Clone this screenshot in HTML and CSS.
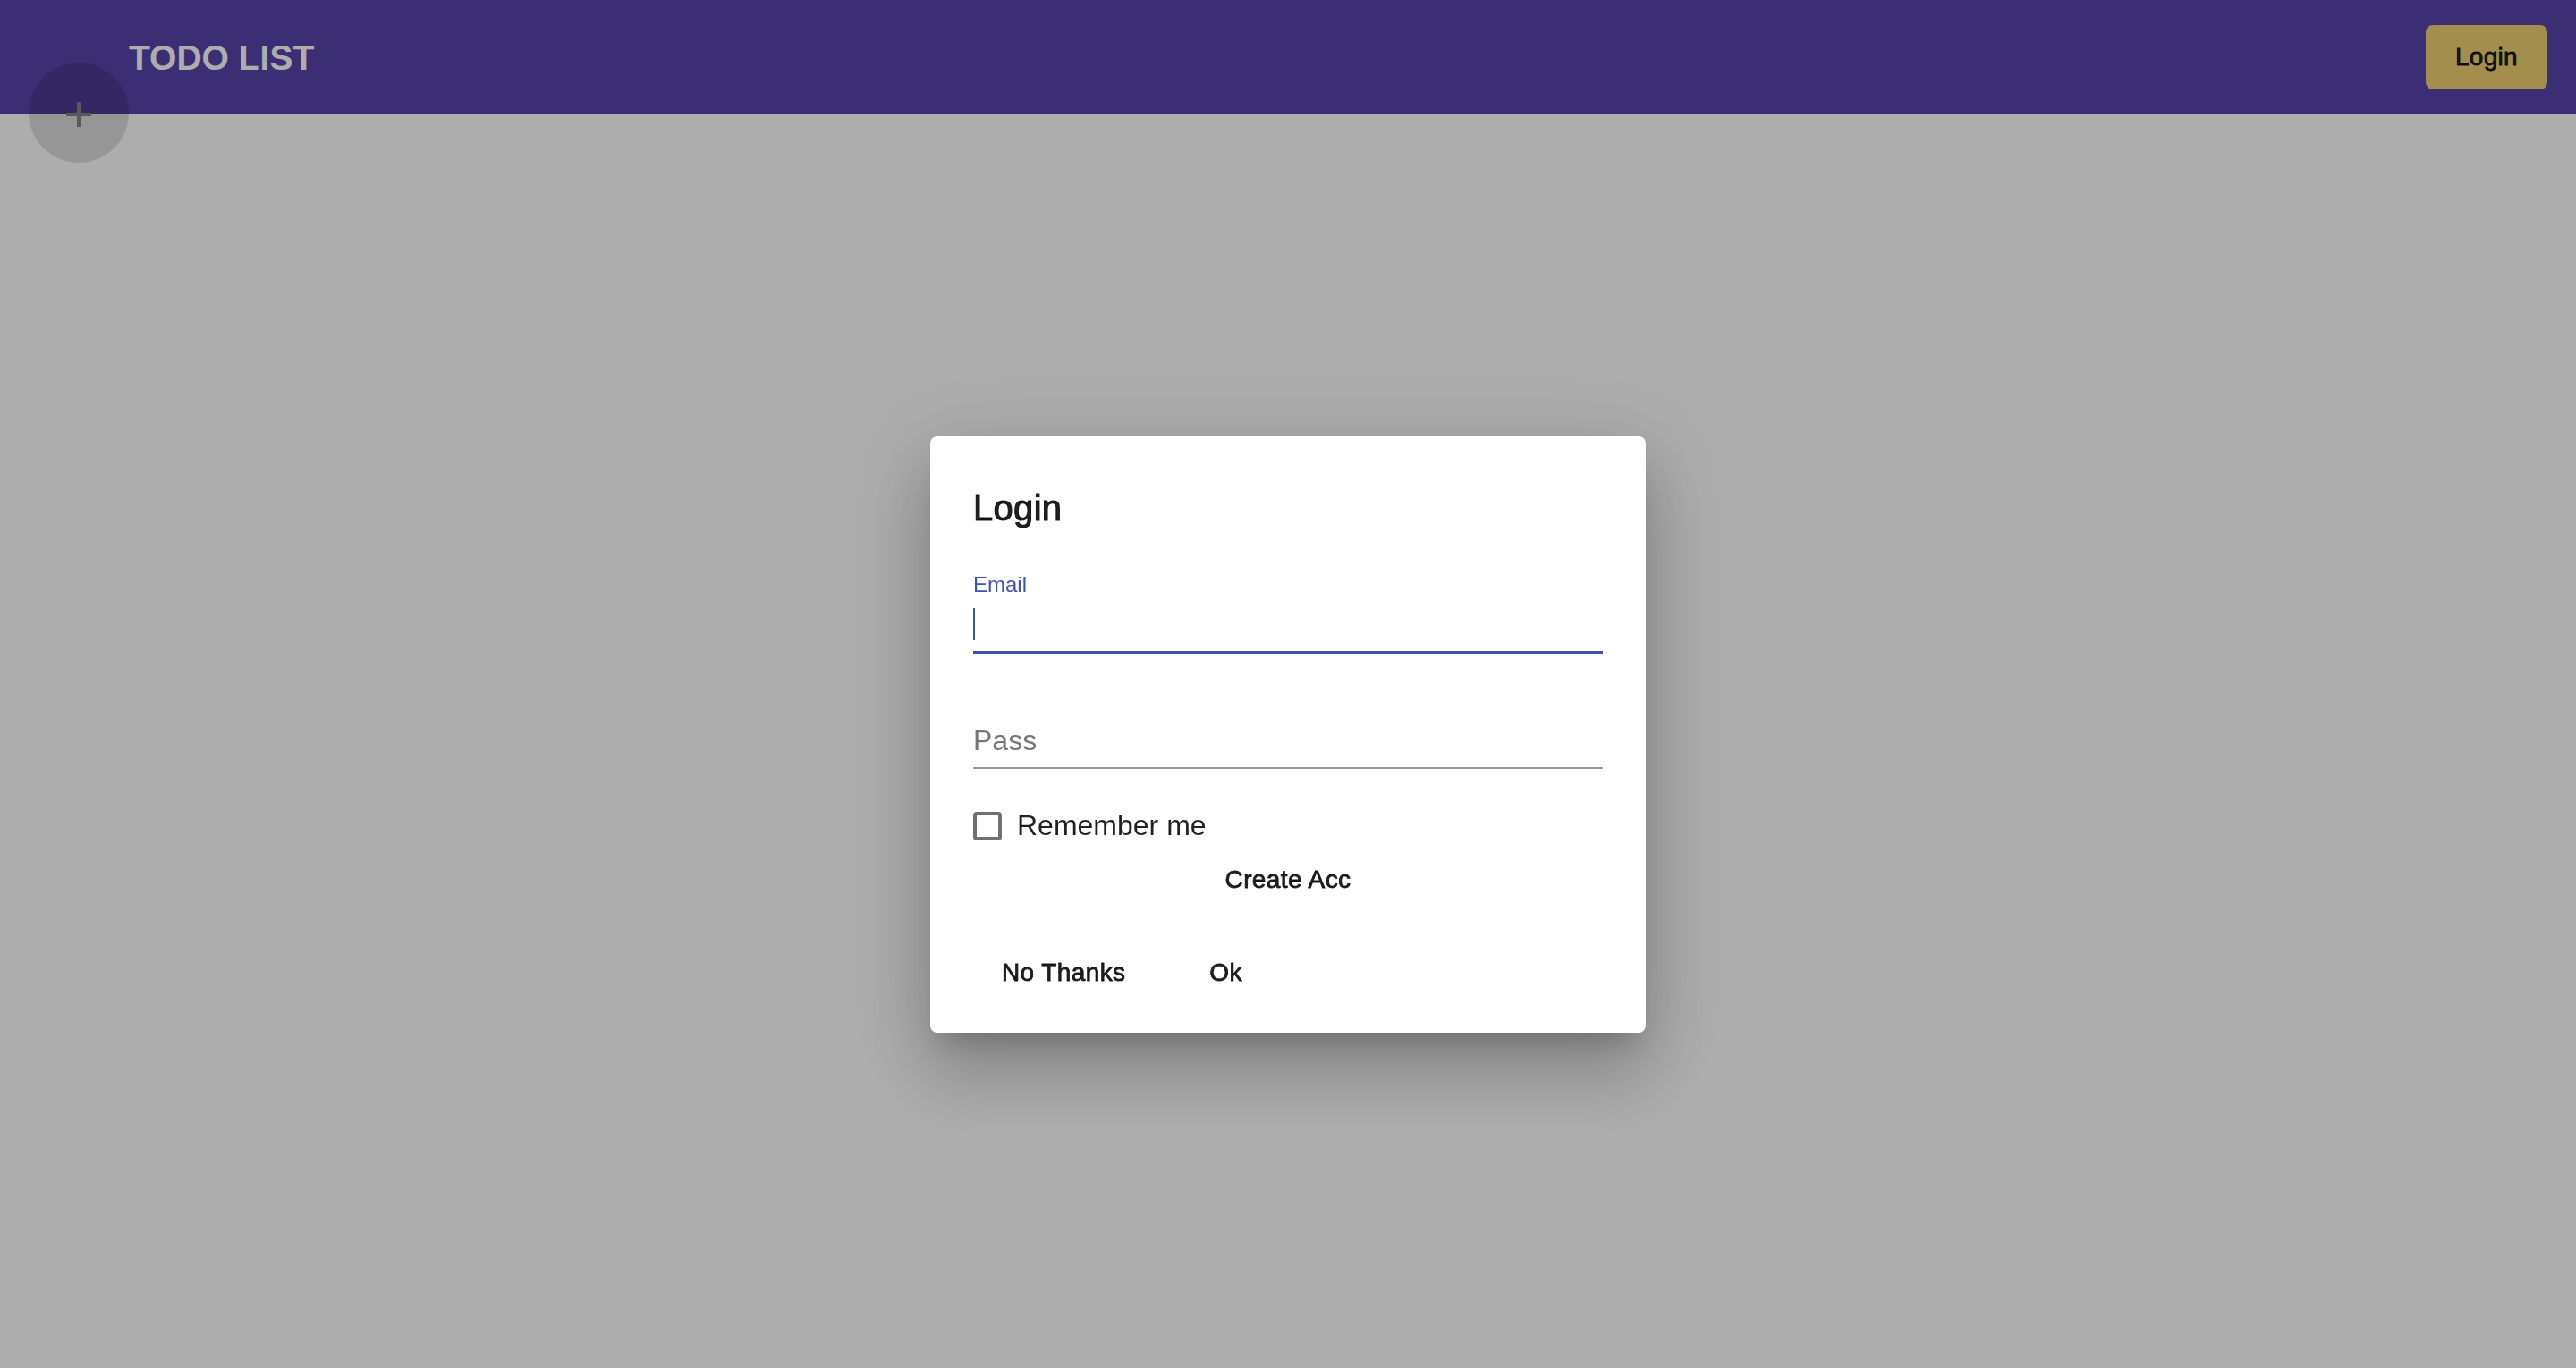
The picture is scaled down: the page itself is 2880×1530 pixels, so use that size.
FILE: index.html
```html
<!DOCTYPE html>
<html lang="en">
<head>
<meta charset="utf-8">
<title>TODO LIST</title>
<link rel="stylesheet" href="styles.css">
</head>
<body>
<header class="toolbar">
  <span class="brand">TODO LIST</span>
  <button class="login-btn" type="button">Login</button>
</header>
<button class="fab" type="button" aria-label="Add todo">
  <svg class="fab-icon" width="28" height="28" viewBox="0 0 28 28" aria-hidden="true">
    <rect x="12" y="0" width="4" height="28" fill="#848484"/>
    <rect x="0" y="12" width="28" height="4" fill="#848484"/>
  </svg>
</button>
<main class="content"></main>

<div class="backdrop"></div>
<div class="dialog-layer">
  <div class="dialog" role="dialog" aria-labelledby="dlg-title">
    <h2 class="dialog-title" id="dlg-title">Login</h2>
    <div class="field field-focused">
      <label class="field-label" for="email">Email</label>
      <div class="field-input-wrap">
        <span class="caret"></span>
        <input class="field-input" id="email" type="email">
      </div>
    </div>
    <div class="field field-pass">
      <div class="field-label-space"></div>
      <div class="field-input-wrap">
        <input class="field-input" type="password" placeholder="Pass">
      </div>
    </div>
    <label class="check-row">
      <span class="check-box"></span>
      <span class="check-label">Remember me</span>
    </label>
    <div class="create-row">
      <button class="text-btn" type="button">Create Acc</button>
    </div>
    <div class="actions">
      <button class="text-btn" type="button">No Thanks</button>
      <button class="text-btn" type="button">Ok</button>
    </div>
  </div>
</div>
</body>
</html>
```

FILE: styles.css
```css
html, body {
  margin: 0;
  padding: 0;
}

body {
  font-family: "Liberation Sans", Arial, sans-serif;
  background: #ffffff;
  height: 1530px;
  overflow: hidden;
  position: relative;
}

.toolbar {
  height: 128px;
  box-sizing: border-box;
  background: #5844ab;
  display: flex;
  align-items: center;
  padding: 0 32px 0 144px;
}

.brand {
  flex: 1;
  font-size: 39px;
  font-weight: 700;
  color: #ffffff;
  line-height: 1;
}

.login-btn {
  height: 72px;
  min-width: 128px;
  padding: 0 33px;
  border: 0;
  border-radius: 8px;
  background: #f1d273;
  color: rgba(0, 0, 0, 0.87);
  font-family: "Liberation Sans", Arial, sans-serif;
  font-size: 28px;
  font-weight: 500;
  letter-spacing: 0.3px;
  -webkit-text-stroke: 0.8px rgba(0, 0, 0, 0.87);
  cursor: pointer;
}

.fab {
  position: absolute;
  left: 32px;
  top: 70px;
  width: 112px;
  height: 112px;
  padding: 0;
  border: 0;
  border-radius: 50%;
  background: rgba(0, 0, 0, 0.13);
  display: flex;
  align-items: center;
  justify-content: center;
}

.fab-icon {
  display: block;
  margin-top: 4px;
}

.content {
  display: block;
}

.backdrop {
  position: fixed;
  inset: 0;
  background: rgba(0, 0, 0, 0.32);
}

.dialog-layer {
  position: fixed;
  inset: 0;
  box-sizing: border-box;
  padding-top: 112px;
  display: flex;
  justify-content: center;
  align-items: center;
}

.dialog {
  width: 800px;
  box-sizing: border-box;
  padding: 48px 48px 31px;
  background: #ffffff;
  border-radius: 8px;
  box-shadow:
    0 22px 30px -14px rgba(0, 0, 0, 0.2),
    0 48px 76px 6px rgba(0, 0, 0, 0.14),
    0 18px 92px 16px rgba(0, 0, 0, 0.12);
}

.dialog-title {
  margin: 0 0 40px;
  font-size: 40px;
  line-height: 64px;
  font-weight: 500;
  letter-spacing: 0.3px;
  color: rgba(0, 0, 0, 0.87);
  -webkit-text-stroke: 1px rgba(0, 0, 0, 0.87);
}

.field {
  display: block;
}

.field-label,
.field-label-space {
  display: block;
  height: 30px;
  font-size: 24px;
  line-height: 30px;
}

.field-label {
  color: #3f51b5;
  margin-top: -1px;
  margin-bottom: 1px;
}

.field-input-wrap {
  position: relative;
  margin-top: 11px;
  padding-bottom: 11px;
  border-bottom: 2px solid #949494;
}

.field-focused .field-input-wrap {
  padding-bottom: 12px;
  border-bottom: 4px solid #3f51b5;
}

.field-pass {
  margin-top: 38px;
}

.field-input {
  display: block;
  width: 100%;
  height: 36px;
  box-sizing: border-box;
  margin: 0;
  padding: 0;
  border: 0;
  outline: none;
  background: transparent;
  font-family: "Liberation Sans", Arial, sans-serif;
  font-size: 32px;
  color: rgba(0, 0, 0, 0.87);
}

.field-input::placeholder {
  color: #767676;
}

.caret {
  position: absolute;
  left: 0;
  top: 0;
  width: 2px;
  height: 36px;
  background: #3f51b5;
}

.check-row {
  margin-top: 44px;
  height: 40px;
  display: flex;
  align-items: center;
  gap: 17px;
  font-size: 32px;
  color: rgba(0, 0, 0, 0.87);
}

.check-box {
  width: 32px;
  height: 32px;
  box-sizing: border-box;
  border: 4px solid #707070;
  border-radius: 4px;
  flex: none;
}

.create-row {
  margin-top: 4px;
  display: flex;
  justify-content: center;
}

.actions {
  margin-top: 32px;
  display: flex;
  gap: 16px;
}

.text-btn {
  height: 72px;
  min-width: 128px;
  padding: 0 32px;
  border: 0;
  border-radius: 8px;
  background: transparent;
  color: rgba(0, 0, 0, 0.87);
  font-family: "Liberation Sans", Arial, sans-serif;
  font-size: 28px;
  font-weight: 500;
  line-height: 72px;
  letter-spacing: 0.4px;
  -webkit-text-stroke: 0.8px rgba(0, 0, 0, 0.87);
  cursor: pointer;
}
```
